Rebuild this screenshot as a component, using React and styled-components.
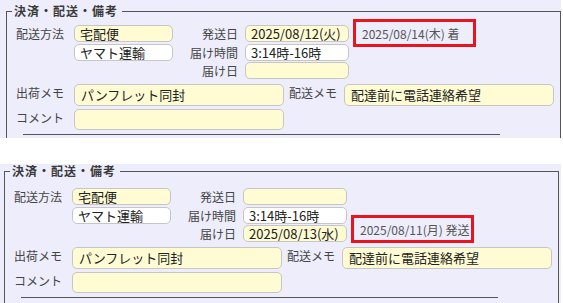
import React from "react";
import styled, { createGlobalStyle } from "styled-components";

const GlobalStyle = createGlobalStyle`
  body {
    margin: 0;
    background: #ffffff;
    font-family: "Noto Sans CJK JP", "Noto Sans", sans-serif;
  }
`;

const panels = [
    {
        id: 1,
        height: 138,
        top: 5,
        left: 6,
        padTop: 8,
        after: 26,
        ship: "2025/08/12(火)",
        arrive: "",
        status: "2025/08/14(木) 着",
        statusRow: 0,
        statusTop: -6,
    },
    {
        id: 2,
        height: 139,
        top: 1,
        left: 4,
        padTop: 11,
        after: 0,
        ship: "",
        arrive: "2025/08/13(水)",
        status: "2025/08/11(月) 発送",
        statusRow: 2,
        statusTop: -10,
    },
];

const rowsFor = (p) => [
    { l1: "配送方法", f1: { v: "宅配便", tone: "yellow" }, l2: "発送日", f2: { v: p.ship, tone: "yellow" } },
    { l1: "", f1: { v: "ヤマト運輸", tone: "white" }, l2: "届け時間", f2: { v: "3:14時-16時", tone: "white" } },
    { l1: "", f1: null, l2: "届け日", f2: { v: p.arrive, tone: "yellow" } },
];

const ShippingPanel = ({ data }) => (
    <Panel $height={data.height} $top={data.top} $left={data.left} $after={data.after}>
        <Fieldset $padTop={data.padTop}>
            <Legend>決済・配送・備考</Legend>
            <TopGrid>
                {rowsFor(data).map((r, i) => (
                    <React.Fragment key={i}>
                        <Label $gap={10}>{r.l1}</Label>
                        {r.f1 ? <Field $tone={r.f1.tone}>{r.f1.v}</Field> : <span />}
                        <Label $gap={7}>{r.l2}</Label>
                        <Field $tone={r.f2.tone}>{r.f2.v}</Field>
                        {data.statusRow === i ? (
                            <Status $mt={data.statusTop}>{data.status}</Status>
                        ) : (
                            <span />
                        )}
                    </React.Fragment>
                ))}
            </TopGrid>
            <MemoRow $mt={5}>
                <Label $gap={10}>出荷メモ</Label>
                <Memo $h={22}>パンフレット同封</Memo>
                <Label $gap={7} $w={60}>配送メモ</Label>
                <Memo $h={22}>配達前に電話連絡希望</Memo>
            </MemoRow>
            <MemoRow $mt={3}>
                <Label $gap={10}>コメント</Label>
                <Memo $h={21}></Memo>
            </MemoRow>
            <Divider />
        </Fieldset>
    </Panel>
);

const App = () => (
    <>
        <GlobalStyle />
        {panels.map((p) => (
            <ShippingPanel key={p.id} data={p} />
        ))}
    </>
);

export default App;

const Panel = styled.section`
    box-sizing: border-box;
    width: 561px;
    height: ${({ $height }) => $height}px;
    overflow: hidden;
    background: #ededfb;
    padding-top: ${({ $top }) => $top}px;
    padding-left: ${({ $left }) => $left}px;
    margin-bottom: ${({ $after }) => $after}px;
`;

const Fieldset = styled.fieldset`
    box-sizing: border-box;
    width: 555px;
    margin: 0;
    border: 1px solid #555555;
    padding: ${({ $padTop }) => $padTop}px 0 20px 5px;
    min-width: 0;
`;

const Legend = styled.legend`
    padding: 0 4px 0 2px;
    font-size: 12px;
    line-height: 12px;
    letter-spacing: 1px;
    font-weight: bold;
    color: #3a3a3a;
`;

const TopGrid = styled.div`
    display: grid;
    grid-template-columns: 62px 99px 72px 104px 127px;
    grid-template-rows: 17px 17px 17px;
    row-gap: 1.5px;
`;

const Label = styled.div`
    box-sizing: border-box;
    width: ${({ $w }) => ($w ? `${$w}px` : "auto")};
    flex: none;
    padding-right: ${({ $gap }) => $gap}px;
    text-align: right;
    font-size: 12px;
    line-height: 17px;
    color: #454545;
    white-space: nowrap;
`;

const Field = styled.div`
    box-sizing: border-box;
    display: flex;
    align-items: center;
    height: 17px;
    padding: 0 5px;
    border: 1px solid #c6c6c6;
    border-radius: 5px;
    background: ${({ $tone }) => ($tone === "white" ? "#ffffff" : "#fffcd4")};
    font-size: 13px;
    line-height: 15px;
    color: #222222;
    white-space: nowrap;
    overflow: hidden;
`;

const Status = styled.div`
    box-sizing: border-box;
    display: flex;
    align-items: center;
    width: 123px;
    height: 28px;
    margin: ${({ $mt }) => `${$mt}px 0 ${17 - 28 - $mt}px 4px`};
    padding-left: 6px;
    border: 3px solid #e8141e;
    font-size: 12px;
    color: #555555;
    white-space: nowrap;
    overflow: hidden;
`;

const MemoRow = styled.div`
    display: grid;
    grid-template-columns: 62px 210px 60px 210px;
    margin-top: ${({ $mt }) => $mt}px;
`;

const Memo = styled.div`
    box-sizing: border-box;
    height: ${({ $h }) => $h}px;
    padding: 2px 6px 0;
    border: 1px solid #c6c6c6;
    border-radius: 5px;
    background: #fffcd4;
    font-size: 13px;
    line-height: 16px;
    color: #222222;
    white-space: nowrap;
`;

const Divider = styled.div`
    width: 477px;
    height: 1px;
    margin: 4px 0 0 11px;
    background: #555555;
`;
